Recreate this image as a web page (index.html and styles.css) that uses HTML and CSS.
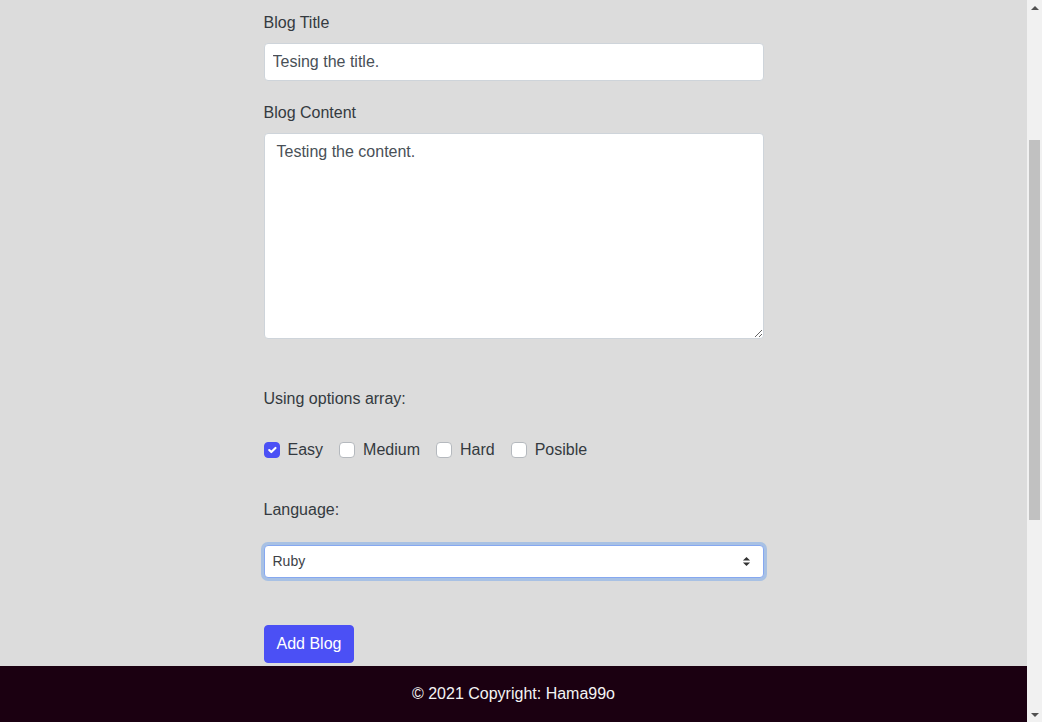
FILE: index.html
```html
<!DOCTYPE html>
<html lang="en">
<head>
<meta charset="utf-8">
<title>New Blog</title>
<link rel="stylesheet" href="styles.css">
</head>
<body>
<div class="page">
  <main class="content">
    <form class="blog-form">
      <label class="form-label" for="title">Blog Title</label>
      <input class="form-input" id="title" type="text" value="Tesing the title.">

      <label class="form-label label-content" for="content">Blog Content</label>
      <textarea class="form-textarea" id="content">Testing the content.</textarea>

      <p class="section-label options-label">Using options array:</p>
      <div class="check-row">
        <label class="check"><input type="checkbox" checked><span>Easy</span></label>
        <label class="check"><input type="checkbox"><span>Medium</span></label>
        <label class="check"><input type="checkbox"><span>Hard</span></label>
        <label class="check"><input type="checkbox"><span>Posible</span></label>
      </div>

      <p class="section-label language-label">Language:</p>
      <select class="form-select">
        <option>Ruby</option>
        <option>JavaScript</option>
        <option>Python</option>
      </select>

      <button class="btn-add" type="button">Add Blog</button>
    </form>
  </main>
  <footer class="footer">© 2021 Copyright: Hama99o</footer>
</div>
<div class="scrollbar">
  <div class="arrow arrow-up"></div>
  <div class="track">
    <div class="thumb"></div>
  </div>
  <div class="arrow arrow-down"></div>
</div>
</body>
</html>
```
FILE: styles.css
```css
html, body {
  margin: 0;
  height: 100%;
}
body {
  display: flex;
  height: 722px;
  overflow: hidden;
  background: #dcdcdc;
  font-family: "Liberation Sans", Arial, sans-serif;
  font-size: 16px;
  line-height: 24px;
  color: #343a40;
}
.page {
  flex: 1;
  display: flex;
  flex-direction: column;
  min-width: 0;
}
.content {
  flex: 1;
  overflow: hidden;
  padding-top: 11px;
}
.blog-form {
  width: 500px;
  margin: 0 auto;
  display: flex;
  flex-direction: column;
  align-items: flex-start;
}
.form-label {
  display: block;
  margin-bottom: 8px;
}
.label-content {
  margin-top: 20px;
}
.form-input,
.form-textarea,
.form-select {
  box-sizing: border-box;
  width: 100%;
  border: 1px solid #ced4da;
  border-radius: 4px;
  background: #fff;
  color: #495057;
  font-family: inherit;
  font-size: 16px;
  line-height: 24px;
  margin: 0;
  outline: none;
}
.form-input {
  height: 38px;
  padding: 6px 8px;
}
.form-textarea {
  height: 206px;
  padding: 6px 12px;
  resize: vertical;
}
.section-label {
  margin: 0;
}
.options-label {
  margin-top: 48px;
}
.check-row {
  display: flex;
  gap: 16px;
  margin-top: 27px;
}
.check {
  display: flex;
  align-items: center;
  gap: 8px;
  color: #343a40;
}
.check input {
  appearance: none;
  -webkit-appearance: none;
  width: 16px;
  height: 16px;
  margin: 0;
  border: 1px solid #b5b9be;
  border-radius: 4px;
  background: #fff;
}
.check input:checked {
  background-color: #4b50f5;
  border-color: #4b50f5;
  background-image: url("data:image/svg+xml,%3csvg xmlns='http://www.w3.org/2000/svg' viewBox='0 0 20 20'%3e%3cpath fill='none' stroke='%23fff' stroke-linecap='round' stroke-linejoin='round' stroke-width='3' d='M6 10l3 3l6-6'/%3e%3c/svg%3e");
  background-size: 100% 100%;
}
.language-label {
  margin-top: 36px;
}
.form-select {
  appearance: none;
  -webkit-appearance: none;
  margin-top: 23px;
  height: 33px;
  padding: 5px 28px 5px 8px;
  font-size: 14px;
  line-height: 21px;
  color: #3d4247;
  border-color: #86a8f0;
  box-shadow: 0 0 0 3px rgba(13, 110, 253, 0.25);
  background-image: url("data:image/svg+xml,%3csvg xmlns='http://www.w3.org/2000/svg' viewBox='0 0 10 12'%3e%3cpath fill='%23333' d='M5 1L9 5H1z M5 11L1 7H9z'/%3e%3c/svg%3e");
  background-repeat: no-repeat;
  background-position: right 12px center;
  background-size: 9px 11px;
}
.btn-add {
  margin-top: 47px;
  height: 38px;
  padding: 6px 12px;
  border: 1px solid #4b50f5;
  border-radius: 4px;
  background: #4b50f5;
  color: #fff;
  font-family: inherit;
  font-size: 16px;
  line-height: 24px;
  cursor: pointer;
}
.footer {
  height: 56px;
  flex: none;
  display: flex;
  align-items: center;
  justify-content: center;
  background: #1b0011;
  color: #f4f4f4;
}
.scrollbar {
  width: 15px;
  flex: none;
  background: #f1f1f1;
  display: flex;
  flex-direction: column;
}
.arrow {
  height: 15px;
  flex: none;
  display: flex;
  align-items: center;
  justify-content: center;
}
.arrow::before {
  content: "";
  width: 0;
  height: 0;
  border-left: 4px solid transparent;
  border-right: 4px solid transparent;
}
.arrow-up::before {
  border-bottom: 4px solid #505050;
}
.arrow-down::before {
  border-top: 4px solid #505050;
}
.track {
  flex: 1;
  padding: 125px 2px 0;
}
.thumb {
  height: 380px;
  background: #c1c1c1;
}
```
